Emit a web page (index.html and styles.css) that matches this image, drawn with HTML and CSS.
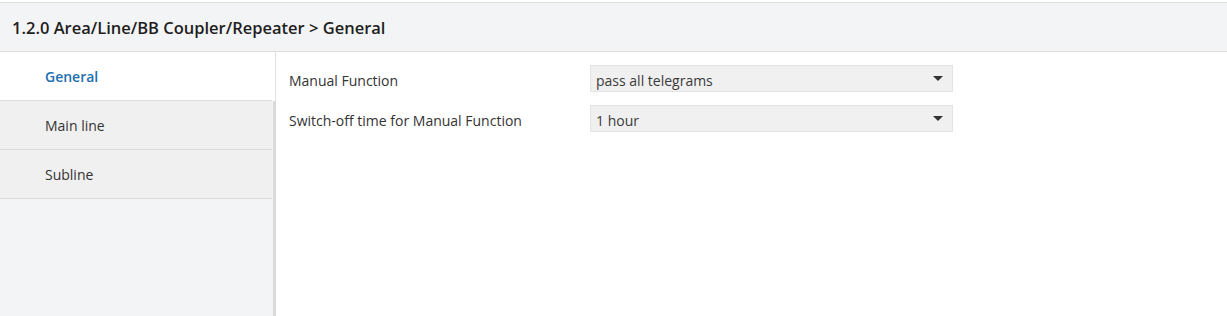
FILE: index.html
```html
<!DOCTYPE html>
<html lang="en">
<head>
    <meta charset="UTF-8">
    <meta name="viewport" content="width=device-width, initial-scale=1.0">
    <title>1.2.0 Area/Line/BB Coupler/Repeater</title>
    <link rel="stylesheet" href="styles.css">
</head>
<body>
    <div class="panel">
        <div class="panel-header">1.2.0 Area/Line/BB Coupler/Repeater &gt; General</div>

        <div class="panel-body">
            <div class="sidebar">
                <div class="nav">
                    <div class="nav-item active">General</div>
                    <div class="nav-item">Main line</div>
                    <div class="nav-item">Subline</div>
                </div>
                <div class="track">
                    <div class="track-top"></div>
                    <div class="track-thumb"></div>
                </div>
            </div>

            <div class="content">
                <div class="param-row">
                    <div class="param-label">Manual Function</div>
                    <div class="select">
                        <span class="select-value">pass all telegrams</span>
                        <span class="caret"></span>
                    </div>
                </div>
                <div class="param-row">
                    <div class="param-label">Switch-off time for Manual Function</div>
                    <div class="select">
                        <span class="select-value">1 hour</span>
                        <span class="caret"></span>
                    </div>
                </div>
            </div>
        </div>
    </div>
</body>
</html>
```

FILE: styles.css
```css
* {
    margin: 0;
    padding: 0;
    box-sizing: border-box;
}

html, body {
    height: 100%;
}

body {
    font-family: "Open Sans", "Noto Sans", sans-serif;
    font-size: 14px;
    color: #333;
    background: #fff;
    padding-top: 2px;
}

.panel {
    height: 100%;
    display: flex;
    flex-direction: column;
}

.panel-header {
    height: 50px;
    padding: 1px 0 0 12px;
    display: flex;
    align-items: center;
    background: #f3f4f5;
    border-top: 1px solid #dcdcdc;
    border-bottom: 1px solid #dcdcdc;
    font-size: 16.5px;
    font-weight: 600;
    color: #1e1e1e;
}

.panel-body {
    flex: 1;
    display: flex;
}

.sidebar {
    width: 276px;
    display: flex;
    background: #f3f4f6;
}

.nav {
    width: 272px;
}

.nav-item {
    height: 49px;
    padding-left: 45px;
    display: flex;
    align-items: center;
    background: #f0f0f0;
    border-bottom: 1px solid #dcdcdc;
    color: #333;
}

.nav-item.active {
    background: #fff;
    color: #1d6fb0;
    font-weight: 600;
}

.track {
    width: 4px;
    display: flex;
    flex-direction: column;
}

.track-top {
    height: 49px;
    background: #fff;
    border-right: 1px solid #e2e2e2;
}

.track-thumb {
    flex: 1;
    margin-left: 1px;
    background: #dadada;
}

.content {
    flex: 1;
    padding: 13px 0 0 13px;
}

.param-row {
    display: flex;
    align-items: center;
    margin-bottom: 13px;
}

.param-label {
    width: 301px;
    padding-top: 3px;
}

.select {
    width: 363px;
    height: 27px;
    padding: 0 9px 0 5px;
    display: flex;
    align-items: center;
    justify-content: space-between;
    background: #f0f0f0;
    border: 1px solid #e4e4e4;
}

.select-value {
    padding-top: 3px;
    color: #3a3a3a;
}

.caret {
    width: 0;
    height: 0;
    border-left: 5px solid transparent;
    border-right: 5px solid transparent;
    border-top: 5px solid #333;
}
```
